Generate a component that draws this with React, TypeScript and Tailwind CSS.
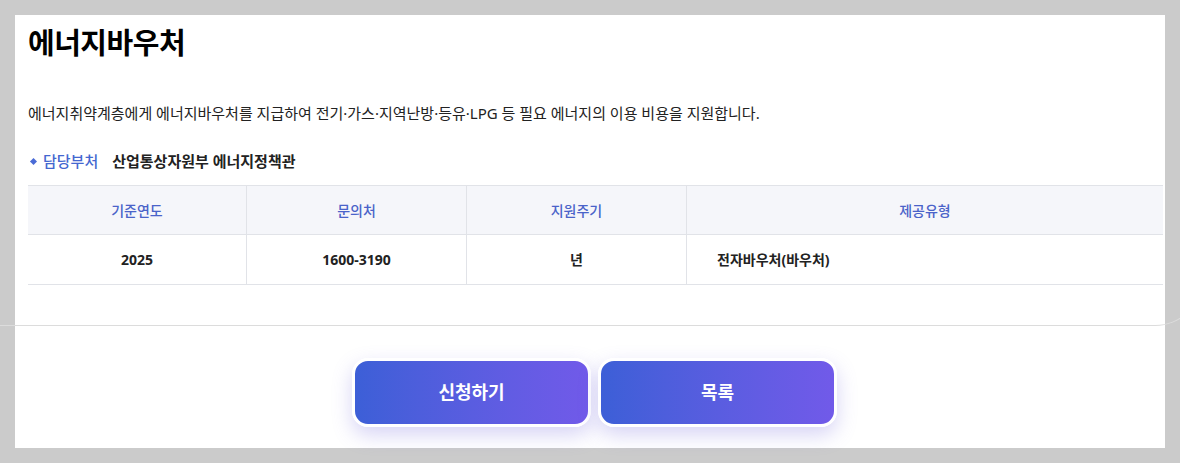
const font = "font-['Noto_Sans','Noto_Sans_CJK_KR',sans-serif]";

const columns = [
  { label: '기준연도', value: '2025', width: 'w-[219px]', align: 'justify-center' },
  { label: '문의처', value: '1600-3190', width: 'w-[220px]', align: 'justify-center' },
  { label: '지원주기', value: '년', width: 'w-[220px]', align: 'justify-center' },
  { label: '제공유형', value: '전자바우처(바우처)', width: 'flex-1', align: 'justify-start pl-[30px]' },
];

function InfoTable() {
  return (
    <div className="border-t border-[#e1e3e8]">
      <div className="flex h-[49px] bg-[#f5f6fa] border-b border-[#e1e3e8]">
        {columns.map((col, i) => (
          <div
            key={col.label}
            className={`${col.width} flex items-center justify-center text-[14px] font-medium text-[#4a63c9] ${
              i < columns.length - 1 ? 'border-r border-[#e1e3e8]' : ''
            }`}
          >
            {col.label}
          </div>
        ))}
      </div>
      <div className="flex h-[50px] border-b border-[#e1e3e8]">
        {columns.map((col, i) => (
          <div
            key={col.label}
            className={`${col.width} flex items-center ${col.align} text-[14px] font-bold text-[#222] ${
              i < columns.length - 1 ? 'border-r border-[#e1e3e8]' : ''
            }`}
          >
            {col.value}
          </div>
        ))}
      </div>
    </div>
  );
}

function ActionButton({ children }: { children: string }) {
  return (
    <button
      type="button"
      className="flex h-[69px] w-[239px] items-center justify-center rounded-[16px] border-[3px] border-white bg-gradient-to-r from-[#3c5fd7] to-[#715ae9] text-[18px] font-bold text-white shadow-[0_8px_20px_rgba(110,100,220,0.28)]"
    >
      {children}
    </button>
  );
}

export default function App() {
  return (
    <div className={`relative h-[463px] w-[1180px] overflow-hidden bg-[#cbcbcb] p-[15px] pb-0 ${font}`}>
      <div className="h-[433px] bg-white">
        <div className="pl-[13px] pr-[2px]">
          <h1 className="pt-[9px] text-[29px] leading-[38px] font-bold tracking-[-0.5px] text-black">에너지바우처</h1>
          <p className="mt-[40px] text-[15px] leading-[22px] text-[#222]">
            에너지취약계층에게 에너지바우처를 지급하여 전기·가스·지역난방·등유·LPG 등 필요 에너지의 이용 비용을 지원합니다.
          </p>
          <div className="mt-[26px] flex h-[22px] items-center text-[15px]">
            <span className="ml-[3px] mr-[7px] h-[5px] w-[5px] rotate-45 bg-[#4a6bd6]" />
            <span className="font-medium text-[#4467d0]">담당부처</span>
            <span className="ml-[14px] font-bold text-[#222]">산업통상자원부 에너지정책관</span>
          </div>
          <div className="mt-[13px]">
            <InfoTable />
          </div>
        </div>
        <div className="mt-[73px] flex justify-center gap-[7px] pl-[9px]">
          <ActionButton>신청하기</ActionButton>
          <ActionButton>목록</ActionButton>
        </div>
      </div>
      {/* 뒤쪽 카드의 아래 테두리 */}
      <div className="pointer-events-none absolute top-[-200px] left-[-20px] h-[526px] w-[1223px] rounded-br-[48px] border-b border-r border-[#dcdcdc]" />
    </div>
  );
}
